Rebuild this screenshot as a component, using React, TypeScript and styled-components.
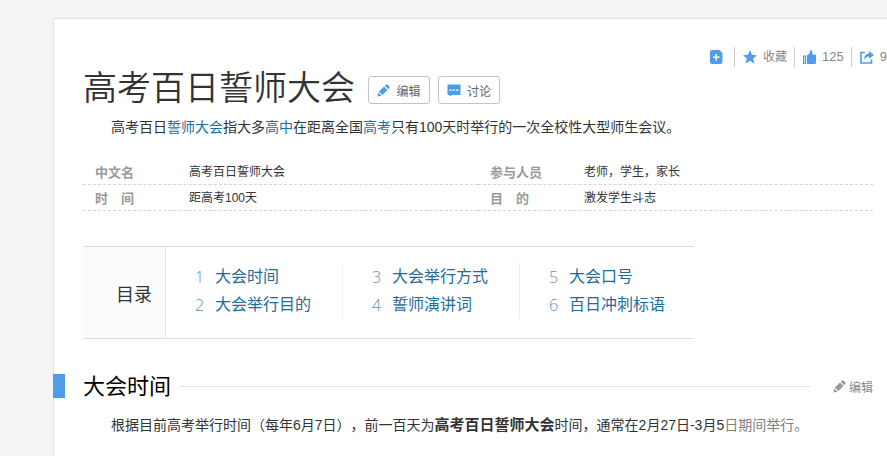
import React from "react";
import styled, { createGlobalStyle } from "styled-components";

const GlobalStyle = createGlobalStyle`
  *, *::before, *::after { box-sizing: border-box; }
  body {
    margin: 0;
    background: #f4f4f4;
    color: #333;
    font-family: "Liberation Sans", "Noto Sans CJK SC", sans-serif;
    font-size: 14px;
    text-spacing-trim: space-all;
  }
  h1, h2, p, dl, dt, dd, ol { margin: 0; padding: 0; }
  svg { display: block; flex: none; }
`;

const Frame = styled.div`
  padding: 18px 0 0 53px;
`;

const Page = styled.main`
  min-height: calc(100vh - 18px);
  padding: 28px 0 16px 29px;
  background: #fff;
  border-top: 1px solid #e3e3e3;
  border-left: 1px solid #e3e3e3;
`;

const Toolbar = styled.div`
  display: flex;
  justify-content: flex-end;
  height: 20px;
`;

const Tool = styled.button`
  display: flex;
  align-items: center;
  gap: 6px;
  margin: 0;
  padding: 0 7px 0 8px;
  border: 0;
  border-left: 1px solid #ccc;
  background: none;
  color: #888;
  font: inherit;
  font-size: 13px;
  line-height: 20px;
  white-space: nowrap;
  cursor: pointer;

  &:first-child { border-left: 0; padding-right: 11px; }
  &:last-child { padding-right: 0; }
`;

const ToolLabel = styled.span`
  font-size: 12px;
`;

const TitleRow = styled.header`
  display: flex;
  align-items: center;
  gap: 8px;
`;

const Title = styled.h1`
  margin-right: 5px;
  padding-bottom: 4px;
  font-size: 34px;
  font-weight: 350;
  line-height: 42px;
  white-space: nowrap;
`;

const OutlineButton = styled.button`
  display: flex;
  align-items: center;
  justify-content: center;
  gap: 6px;
  width: 62px;
  height: 28px;
  padding: 0;
  border: 1px solid #c4c4c4;
  border-radius: 3px;
  background: #fff;
  color: #666;
  font: inherit;
  font-size: 12px;
  cursor: pointer;
`;

const Paragraph = styled.p`
  margin-right: 14px;
  line-height: 28px;
  text-indent: 2em;
`;

const Link = styled.a`
  color: #1f6c9c;
  text-decoration: none;
`;

const Strong = styled.strong`
  font-size: 15px;
`;

const Faded = styled.span`
  color: #808080;
`;

const InfoList = styled.dl`
  display: grid;
  grid-template-columns: 1fr 1fr;
  margin: 18px 14px 0 0;
`;

const InfoItem = styled.div`
  display: grid;
  grid-template-columns: 94px 1fr;
  padding: 2px 0 0 12px;
  border-bottom: 1px dashed #d4d4d4;
  line-height: 23px;
`;

const InfoTerm = styled.dt`
  color: #999;
  font-size: 13px;
  font-weight: 700;
`;

const InfoValue = styled.dd`
  font-size: 12px;
`;

const Contents = styled.nav`
  display: flex;
  max-width: 611px;
  margin-top: 35px;
  border-top: 1px solid #dcdcdc;
  border-bottom: 1px solid #dcdcdc;
`;

const ContentsTitle = styled.h2`
  display: flex;
  flex: none;
  align-items: center;
  justify-content: flex-end;
  width: 83px;
  padding-right: 13px;
  border-right: 1px solid #e4e4e4;
  background: #fbfbfb;
  font-size: 18px;
  font-weight: 400;
`;

const ContentsColumns = styled.div`
  display: grid;
  flex: 1;
  grid-template-columns: 177px 177px 1fr;
  padding: 16px 0 19px;
`;

const ContentsColumn = styled.ol`
  padding-left: 29px;
  border-right: 1px solid #eee;
  list-style: none;

  &:last-child { border-right: 0; }
`;

const ContentsItem = styled.li`
  display: flex;
  font-size: 16px;
  line-height: 28px;
  white-space: nowrap;
`;

const ContentsNumber = styled.span`
  width: 20px;
  color: #5f93b3;
  font-family: "Open Sans", sans-serif;
  font-weight: 300;
`;

const SectionHeader = styled.header`
  display: flex;
  align-items: center;
  gap: 8px;
  margin: 34px 14px 0 -30px;
`;

const SectionMark = styled.span`
  width: 12px;
  height: 24px;
  margin-right: 10px;
  background: #4f9ce8;
`;

const SectionTitle = styled.h2`
  padding-top: 2px;
  color: #000;
  font-size: 22px;
  font-weight: 400;
  line-height: 24px;
`;

const SectionRule = styled.span`
  flex: 1;
  height: 1px;
  margin-right: 14px;
  background: #e4e4e4;
`;

const PlainButton = styled.button`
  display: flex;
  align-items: center;
  gap: 3px;
  padding: 0;
  border: 0;
  background: none;
  color: #888;
  font: inherit;
  font-size: 12px;
  cursor: pointer;
`;

const SectionBody = styled.div`
  margin-top: 12px;
`;

const BLUE = "#4f9ce8";

const PencilIcon = ({ color = BLUE }: { color?: string }) => (
  <svg width="13" height="13" viewBox="0 0 13 13" fill={color} aria-hidden="true">
    <path d="M0.5 12.5 1.2 8.4 4.6 11.8z" />
    <path d="M1.9 7.6 7 2.5 10.5 6 5.4 11.1z" />
    <path d="M7.8 1.8 9.2.5Q10 0 10.7.7L12.3 2.3Q13 3 12.4 3.8L11.2 5.2z" />
  </svg>
);

const CommentIcon = () => (
  <svg width="14" height="13" viewBox="0 0 14 13" aria-hidden="true">
    <path d="M1 .5h12q.5 0 .5.5v9.500q0 .5-.5.5H5L3 12.500 2.500 11H1q-.5 0-.5-.5V1q0-.5.5-.5z" fill={BLUE} />
    <path d="M2.500 5.500h2.300v1.200H2.500zM5.800 5.500h2.300v1.200H5.800zM9.100 5.500h2.300v1.200H9.100z" fill="#fff" />
  </svg>
);

const AddDocIcon = () => (
  <svg width="13" height="14" viewBox="0 0 13 14" aria-hidden="true">
    <path d="M2 0h7.500L12.500 3V12q0 2-2 2H2q-2 0-2-2V2q0-2 2-2z" fill={BLUE} />
    <path d="M5.500 4h1.500v2.500h2.500V8H7v2.500H5.500V8H3V6.500h2.500z" fill="#fff" />
  </svg>
);

const StarIcon = () => (
  <svg width="14" height="14" viewBox="0 0 14 14" fill={BLUE} aria-hidden="true">
    <path d="M7 0 9 4.800 14 5.200 10.200 8.500 11.500 13.500 7 10.800 2.500 13.500 3.800 8.500 0 5.200 5 4.800z" />
  </svg>
);

const ThumbIcon = () => (
  <svg width="13" height="14" viewBox="0 0 13 14" fill={BLUE} aria-hidden="true">
    <path d="M0 5.500h3V14H0zM1 6.500V13h.7V6.500z" fillRule="evenodd" />
    <path d="M3.800 5.500 6.500 3.500 7.200.5Q9.600-.4 9.500 2.500L9.200 4.500H12q1 0 1 1.200V12.500Q13 14 11.500 14H3.800z" />
  </svg>
);

const ShareIcon = () => (
  <svg width="14" height="13" viewBox="0 0 14 13" aria-hidden="true">
    <path d="M5 1.500H1V12h10.500V8.500" fill="none" stroke={BLUE} strokeWidth="1.600" />
    <path d="M9 0 14 4 9 7.800V5.500Q6 5.300 4 9 4 3 9 2.500z" fill={BLUE} />
  </svg>
);

const facts = [
  ["中文名", "高考百日誓师大会"],
  ["参与人员", "老师，学生，家长"],
  ["时　间", "距高考100天"],
  ["目　的", "激发学生斗志"],
];

const chapters = [
  ["大会时间", "大会举行目的"],
  ["大会举行方式", "誓师演讲词"],
  ["大会口号", "百日冲刺标语"],
];

export default function App() {
  return (
    <Frame>
      <GlobalStyle />
      <Page>
        <Toolbar>
          <Tool type="button" aria-label="添加"><AddDocIcon /></Tool>
          <Tool type="button"><StarIcon /><ToolLabel>收藏</ToolLabel></Tool>
          <Tool type="button" aria-label="赞 125"><ThumbIcon />125</Tool>
          <Tool type="button" aria-label="分享 9"><ShareIcon />9</Tool>
        </Toolbar>

        <TitleRow>
          <Title>高考百日誓师大会</Title>
          <OutlineButton type="button"><PencilIcon />编辑</OutlineButton>
          <OutlineButton type="button"><CommentIcon />讨论</OutlineButton>
        </TitleRow>

        <Paragraph>
          高考百日<Link href="#oath">誓师大会</Link>指大多<Link href="#school">高中</Link>在距离全国
          <Link href="#exam">高考</Link>只有100天时举行的一次全校性大型师生会议。
        </Paragraph>

        <InfoList>
          {facts.map(([term, value]) => (
            <InfoItem key={term}>
              <InfoTerm>{term}</InfoTerm>
              <InfoValue>{value}</InfoValue>
            </InfoItem>
          ))}
        </InfoList>

        <Contents aria-label="目录">
          <ContentsTitle>目录</ContentsTitle>
          <ContentsColumns>
            {chapters.map((column, c) => (
              <ContentsColumn key={column[0]} start={c * 2 + 1}>
                {column.map((name, i) => (
                  <ContentsItem key={name}>
                    <ContentsNumber>{c * 2 + i + 1}</ContentsNumber>
                    <Link href={`#section-${c * 2 + i + 1}`}>{name}</Link>
                  </ContentsItem>
                ))}
              </ContentsColumn>
            ))}
          </ContentsColumns>
        </Contents>

        <section id="section-1">
          <SectionHeader>
            <SectionMark />
            <SectionTitle>大会时间</SectionTitle>
            <SectionRule />
            <PlainButton type="button"><PencilIcon color="#999" />编辑</PlainButton>
          </SectionHeader>
          <SectionBody>
            <Paragraph>
              根据目前高考举行时间（每年6月7日），前一百天为<Strong>高考百日誓师大会</Strong>时间，通常在2月27日-3月5
              <Faded>日期间举行。</Faded>
            </Paragraph>
          </SectionBody>
        </section>
      </Page>
    </Frame>
  );
}
